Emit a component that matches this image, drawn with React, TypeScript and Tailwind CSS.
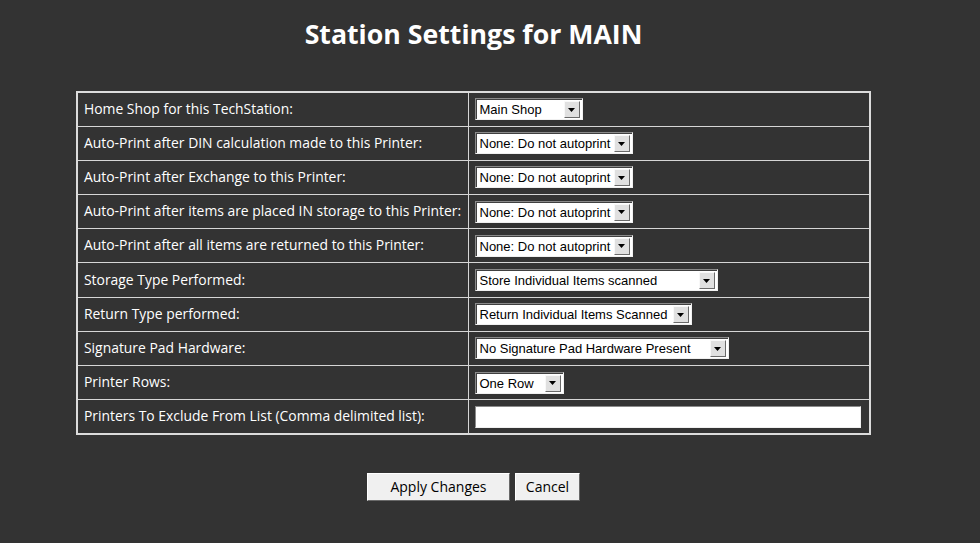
import React from 'react'

const rows: { label: string; value?: string; width?: number; input?: boolean }[] = [
  { label: 'Home Shop for this TechStation:', value: 'Main Shop', width: 108 },
  { label: 'Auto-Print after DIN calculation made to this Printer:', value: 'None: Do not autoprint', width: 158 },
  { label: 'Auto-Print after Exchange to this Printer:', value: 'None: Do not autoprint', width: 158 },
  { label: 'Auto-Print after items are placed IN storage to this Printer:', value: 'None: Do not autoprint', width: 158 },
  { label: 'Auto-Print after all items are returned to this Printer:', value: 'None: Do not autoprint', width: 158 },
  { label: 'Storage Type Performed:', value: 'Store Individual Items scanned', width: 243 },
  { label: 'Return Type performed:', value: 'Return Individual Items Scanned', width: 217 },
  { label: 'Signature Pad Hardware:', value: 'No Signature Pad Hardware Present', width: 254 },
  { label: 'Printer Rows:', value: 'One Row', width: 89 },
  { label: 'Printers To Exclude From List (Comma delimited list):', input: true },
]

// old windows-style dropdown
function ClassicSelect({ value, width }: { value: string; width: number }) {
  return (
    <div
      className="flex h-[22px] items-stretch bg-white border border-t-[#8a8a8a] border-l-[#8a8a8a] border-r-[#f0f0f0] border-b-[#f0f0f0]"
      style={{ width }}
    >
      <div className="flex flex-1 items-center border-t border-l border-t-[#404040] border-l-[#404040] pl-[3px] pr-[2px]">
        <span className="flex-1 whitespace-nowrap text-[13px] leading-none text-black font-['Liberation_Sans',Arial,sans-serif]">
          {value}
        </span>
        <div className="flex h-[17px] w-[16px] items-center justify-center bg-[#e0e0e0] border border-t-[#f8f8f8] border-l-[#f8f8f8] border-r-[#6a6a6a] border-b-[#6a6a6a]">
          <svg width="7" height="4" viewBox="0 0 7 4">
            <path d="M0 0h7L3.5 4z" fill="#000" />
          </svg>
        </div>
      </div>
    </div>
  )
}

export default function App() {
  return (
    <div className="min-h-[543px] bg-[#333333] text-white font-['Open_Sans','Segoe_UI',sans-serif]">
      <div className="w-[947px] pt-[16px]">
        <h1 className="text-center text-[26.7px] font-bold leading-[36px] text-white">Station Settings for MAIN</h1>

        <table className="mx-auto mt-[39px] w-[795px] border-collapse border-2 border-[#dcdcdc]">
          <tbody>
            {rows.map((r) => (
              <tr key={r.label}>
                <td className="h-[34.2px] w-[391px] border border-[#d6d6d6] pl-[6px] text-[13.9px] text-white">{r.label}</td>
                <td className="h-[34.2px] border border-[#d6d6d6] pl-[6px]">
                  {r.input ? (
                    <input
                      type="text"
                      className="block h-[22px] w-[386px] bg-white border border-t-[#8a8a8a] border-l-[#8a8a8a] border-r-[#f0f0f0] border-b-[#f0f0f0] outline-none"
                    />
                  ) : (
                    <ClassicSelect value={r.value!} width={r.width!} />
                  )}
                </td>
              </tr>
            ))}
          </tbody>
        </table>

        <div className="mt-[38px] flex justify-center gap-[5px]">
          <button className="h-[28px] w-[143px] bg-[#f0f0f0] text-[14px] text-black border border-t-[#ffffff] border-l-[#ffffff] border-r-[#696969] border-b-[#696969]">
            Apply Changes
          </button>
          <button className="h-[28px] w-[65px] bg-[#f0f0f0] text-[14px] text-black border border-t-[#ffffff] border-l-[#ffffff] border-r-[#696969] border-b-[#696969]">
            Cancel
          </button>
        </div>
      </div>
    </div>
  )
}
